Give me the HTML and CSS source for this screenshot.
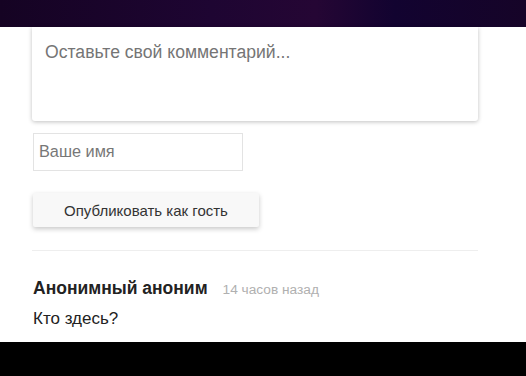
FILE: index.html
```html
<!DOCTYPE html>
<html lang="ru">
<head>
    <meta charset="UTF-8">
    <meta name="viewport" content="width=device-width, initial-scale=1.0">
    <title>Комментарии</title>
    <link rel="stylesheet" href="styles.css">
</head>
<body>
<div class="top-bar"></div>

<!-- Comment form -->
<div class="comments">
    <div class="comment-box">Оставьте свой комментарий...</div>
    <div class="name-input">Ваше имя</div>
    <button class="post-btn">Опубликовать как гость</button>

    <hr class="divider">

    <div class="comment">
        <div class="comment-head">
            <span class="author">Анонимный аноним</span>
            <span class="time">14 часов назад</span>
        </div>
        <p class="comment-text">Кто здесь?</p>
    </div>
</div>

<div class="bottom-bar"></div>
</body>
</html>
```

FILE: styles.css
```css
body {
    font-family: 'Liberation Sans', Arial, sans-serif;
    margin: 0;
    padding: 0;
    background-color: #fff;
    color: #333;
    width: 526px;
    height: 376px;
    overflow: hidden;
    display: flex;
    flex-direction: column;
}

.top-bar {
    height: 27px;
    background: linear-gradient(90deg, #150323 0%, #1e0532 40%, #250634 60%, #120330 75%, #160428 100%);
}

.comments {
    width: 446px;
    margin-left: 32px;
    flex: 1;
    display: flex;
    flex-direction: column;
    align-items: flex-start;
}

.comment-box {
    box-sizing: border-box;
    width: 446px;
    height: 94px;
    padding: 15px 13px;
    font-size: 17.6px;
    color: #757575;
    background: #fff;
    border-radius: 0 0 3px 3px;
    box-shadow: 0 1px 4px rgba(0, 0, 0, 0.25);
}

.name-input {
    box-sizing: border-box;
    width: 210px;
    height: 38px;
    margin-top: 12px;
    margin-left: 1px;
    padding: 8px 5px;
    font-size: 16.3px;
    color: #777;
    border: 1px solid #e3e3e3;
}

.post-btn {
    width: 226px;
    height: 34px;
    margin-top: 22px;
    margin-left: 1px;
    font-family: inherit;
    font-size: 15px;
    color: #333;
    background-color: #f8f8f8;
    border: none;
    border-radius: 2px;
    box-shadow: 0 2px 5px rgba(0, 0, 0, 0.22);
}

.divider {
    width: 446px;
    margin: 23px 0 0 0;
    border: none;
    border-top: 1px solid #eee;
}

.comment {
    margin-top: 27px;
    margin-left: 1px;
}

.comment-head {
    display: flex;
    align-items: baseline;
    gap: 15px;
}

.author {
    font-size: 17.5px;
    font-weight: bold;
    color: #222;
}

.time {
    font-size: 13.7px;
    color: #b0b0b0;
}

.comment-text {
    margin: 10px 0 0 0;
    font-size: 17px;
    color: #222;
}

.bottom-bar {
    height: 34px;
    background-color: #000;
}
```
